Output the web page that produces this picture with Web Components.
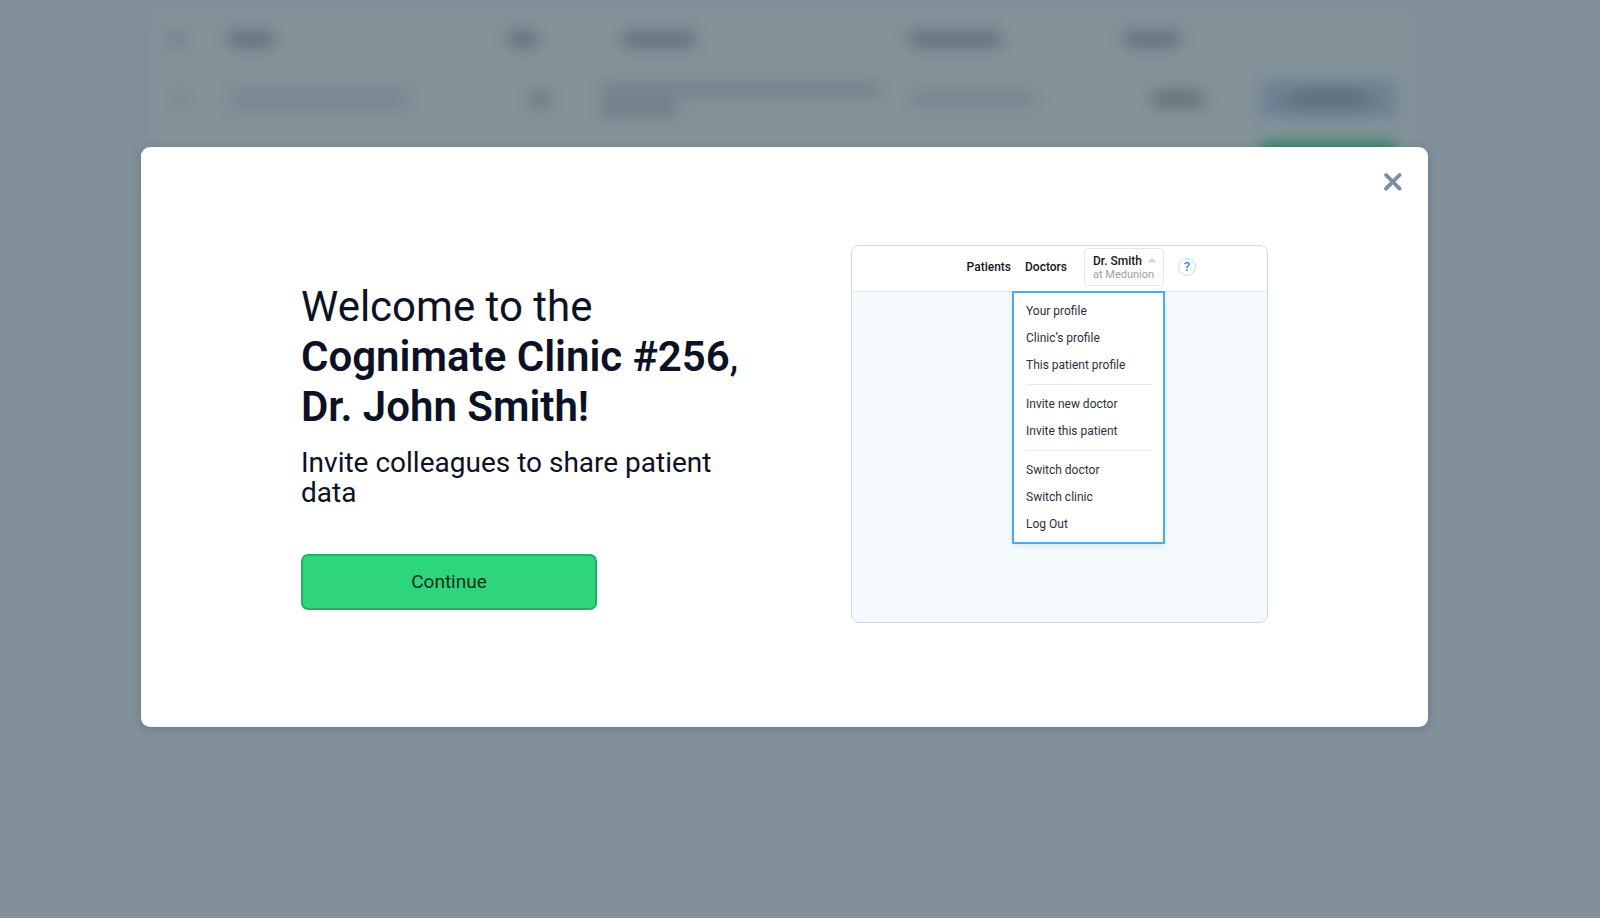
<!DOCTYPE html>
<html lang="en">
<head>
<meta charset="utf-8">
<meta name="viewport" content="width=device-width, initial-scale=1">
<title>Cognimate Clinic</title>
<style>
  body { margin: 0; background: #82909a; font-family: Roboto, "Liberation Sans", sans-serif; color: #0b1226; }
</style>
</head>
<body>
<welcome-page></welcome-page>

<script>
class BaseElement extends HTMLElement {
  constructor() {
    super();
    this.attachShadow({ mode: 'open' }).innerHTML = this.constructor.markup;
  }
}

/* Patient list behind the dialog, out of focus. */
customElements.define('patient-backdrop', class extends BaseElement {
  static markup = `
    <style>
      :host { display: block; filter: blur(8px); padding: 10px 186px 0 150px; }
      .panel { background: #85929a; padding: 0 18px; }
      .row { display: grid; grid-template-columns: 60fr 280fr 92fr 310fr 215fr 137fr 135fr; align-items: center; height: 62px; }
      .head { height: 58px; }
      i { display: block; height: 16px; border-radius: 4px; background: #75828b; }
      .head i { background: #61707a; }
      .lines { display: grid; gap: 4px; }
      .shift { margin-left: 22px; }
      .btn { height: 38px; width: 100%; background: #6b8091; display: grid; place-items: center; }
      .btn i { width: 76px; height: 14px; background: #5b6c7a; }
      .green { background: #2f8462; }
    </style>
    <div class="panel">
      <div class="row head">
        <i style="width:18px;background:#74818b"></i><i style="width:46px"></i><i style="width:30px"></i>
        <i class="shift" style="width:74px"></i><i style="width:92px"></i><i style="width:56px"></i>
      </div>
      <div class="row">
        <i style="width:14px;margin-left:6px"></i><i style="width:182px;height:26px;background:#7b8891"></i>
        <i class="shift" style="width:20px;background:#6a7780"></i>
        <div class="lines"><i style="width:280px"></i><i style="width:76px;background:#6f7c85"></i></div>
        <i style="width:128px;background:#78858e"></i>
        <i style="width:52px;margin-left:28px;background:#636f77"></i>
        <div class="btn"><i></i></div>
      </div>
      <div class="row">
        <span></span><span></span><span></span><span></span><span></span><span></span>
        <div class="btn green"></div>
      </div>
    </div>`;
});

customElements.define('close-button', class extends BaseElement {
  static markup = `
    <style>
      :host { display: block; }
      button { display: block; padding: 0; border: 0; background: none; width: 24px; height: 24px; cursor: pointer; color: #7a8ca6; }
      svg { display: block; }
    </style>
    <button type="button" aria-label="Close">
      <svg width="24" height="24" viewBox="0 0 24 24" fill="none" stroke="currentColor" stroke-width="3.8" stroke-linecap="round"><path d="M5 5 18.600 18.600M18.600 5 5 18.600"/></svg>
    </button>`;
});

customElements.define('primary-button', class extends BaseElement {
  static markup = `
    <style>
      :host { display: block; }
      button { width: 100%; height: 56px; padding: 0; border: 2px solid #1fb262; border-radius: 7px; background: #2ed67b; color: #05301a; font: 400 19px/24px Roboto, sans-serif; cursor: pointer; }
    </style>
    <button type="button"><slot></slot></button>`;
});

customElements.define('menu-link', class extends BaseElement {
  static markup = `
    <style>
      :host { display: block; }
      a { display: block; font-size: 12px; line-height: 27px; color: #2b303d; text-decoration: none; white-space: nowrap; }
    </style>
    <a href="#"><slot></slot></a>`;
});

customElements.define('account-menu', class extends BaseElement {
  static markup = `
    <style>
      :host { display: block; box-sizing: border-box; width: 153px; padding: 5px 11px 4px 12px; border: 2px solid #4cabe4; background: #fff; box-shadow: 0 2px 6px rgba(60,110,150,.12); }
      hr { margin: 5px 0 6px; border: 0; height: 1px; background: #e4e8f0; }
    </style>
    <menu-link>Your profile</menu-link>
    <menu-link>Clinic’s profile</menu-link>
    <menu-link>This patient profile</menu-link>
    <hr>
    <menu-link>Invite new doctor</menu-link>
    <menu-link>Invite this patient</menu-link>
    <hr>
    <menu-link>Switch doctor</menu-link>
    <menu-link>Switch clinic</menu-link>
    <menu-link>Log Out</menu-link>`;
});

/* Miniature of the app with the account menu open. */
customElements.define('app-preview', class extends BaseElement {
  static markup = `
    <style>
      :host { display: block; box-sizing: border-box; width: 417px; height: 378px; border: 1px solid #ccd9e6; border-radius: 8px; background: #f5fafd; overflow: hidden; }
      nav { display: flex; align-items: center; justify-content: flex-end; height: 42px; padding: 0 71px 3px 0; background: #fff; border-bottom: 1px solid #dde6ef; font-size: 12px; font-weight: 500; }
      a { color: #15171c; text-decoration: none; margin-right: 14px; }
      .account { box-sizing: border-box; width: 80px; height: 38px; margin: 0 14px 0 3px; padding: 5px 0 0 8px; border: 1px solid #e3e8f0; border-radius: 4px; background: #fff; color: #15171c; font: 500 12px/14px Roboto, sans-serif; text-align: left; display: flex; flex-wrap: wrap; align-content: flex-start; gap: 0 6px; white-space: nowrap; }
      .account svg { margin-top: 3px; }
      .account small { display: block; width: 100%; font-size: 11px; line-height: 13px; font-weight: 400; color: #9a9ea8; }
      .help { box-sizing: border-box; width: 18px; height: 18px; padding: 0; border: 1px solid #cfd8e8; border-radius: 50%; background: #fff; color: #2a8af0; font: 500 13px/16px Roboto, sans-serif; }
      account-menu { margin: -1px 0 0 160px; }
    </style>
    <nav>
      <a href="#">Patients</a>
      <a href="#">Doctors</a>
      <button class="account" type="button">Dr. Smith <svg width="8" height="8" viewBox="0 0 8 8" fill="none" stroke="#b4b9c4" stroke-width="1.2"><path d="M1 5.500 4 2.500 7 5.500"/></svg><small>at Medunion</small></button>
      <button class="help" type="button">?</button>
    </nav>
    <account-menu></account-menu>`;
});

customElements.define('welcome-dialog', class extends BaseElement {
  static markup = `
    <style>
      :host { display: block; position: relative; box-sizing: border-box; padding: 98px 160px 104px; border-radius: 9px; background: #fff; box-shadow: 0 2px 10px rgba(30,60,80,.25); }
      close-button { position: absolute; top: 23px; right: 23px; }
      .body { display: flex; align-items: flex-start; justify-content: space-between; gap: 40px; }
      .copy { max-width: 456px; padding-top: 37px; }
      ::slotted(h1) { margin: 0 0 16px; font-size: 42px; line-height: 50px; font-weight: 400; }
      ::slotted(p) { margin: 0 0 46px; font-size: 28px; line-height: 30px; font-weight: 400; }
      primary-button { width: 296px; }
    </style>
    <close-button></close-button>
    <div class="body">
      <div class="copy">
        <slot></slot>
        <primary-button>Continue</primary-button>
      </div>
      <app-preview></app-preview>
    </div>`;
});

customElements.define('welcome-page', class extends BaseElement {
  static markup = `
    <style>
      :host { display: grid; min-height: 100vh; overflow: hidden; align-items: start; }
      patient-backdrop, main { grid-area: 1 / 1; }
      main { position: relative; padding: 147px 172px 48px 141px; }
      b { font-weight: 600; }
    </style>
    <patient-backdrop aria-hidden="true"></patient-backdrop>
    <main>
      <welcome-dialog role="dialog" aria-label="Welcome">
        <h1>Welcome to the<br><b>Cognimate Clinic #256</b>,<br><b>Dr. John Smith!</b></h1>
        <p>Invite colleagues to share patient data</p>
      </welcome-dialog>
    </main>`;
});
</script>
</body>
</html>
